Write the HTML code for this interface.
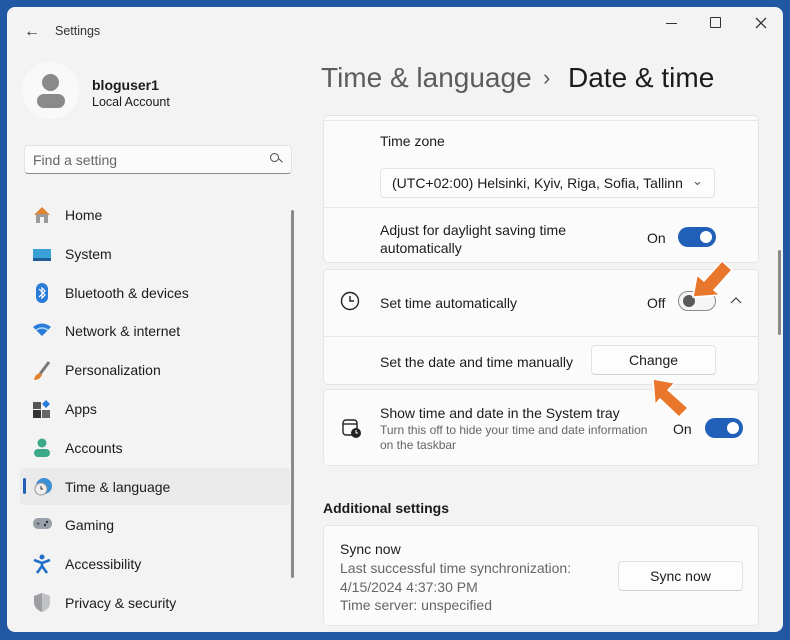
<!DOCTYPE html>
<html><head><meta charset="utf-8"><style>
*{margin:0;padding:0;box-sizing:border-box}
body{width:790px;height:640px;background:#2058a3;font-family:"Liberation Sans",sans-serif;color:#1b1b1b;overflow:hidden;position:relative}
.win{position:absolute;left:7px;top:7px;width:776px;height:625px;background:#f3f3f3;border-radius:8px;overflow:hidden}
.a{position:absolute;white-space:nowrap}
.t14{font-size:14px}
.card{position:absolute;left:316px;width:436px;background:#fbfbfb;border:1px solid #e5e5e5;border-radius:5px}
.div{position:absolute;left:316px;width:436px;height:1px;background:#e8e8e8}
.tog{position:absolute;width:38px;height:20px;border-radius:10px;background:#2160b8}
.tog::after{content:"";position:absolute;right:4px;top:4px;width:12px;height:12px;border-radius:50%;background:#fff}
.off{background:#f6f6f6;border:1px solid #8a8a8a}
.off::after{left:4px;right:auto;top:3px;background:#5a5a5a}
.btn{position:absolute;background:#fdfdfd;border:1px solid #e2e2e2;border-bottom-color:#cfcfcf;border-radius:4px;font-size:14px;text-align:center}
.nav{position:absolute;left:58px;font-size:14px}
.ic{position:absolute;left:26px;width:18px;height:18px}
.sub{color:#666}
</style></head><body>
<div class="win">
<div class="a" style="left:17px;top:16px;font-size:16px;color:#333">←</div>
<div class="a" style="left:48px;top:17px;font-size:12.5px;color:#333">Settings</div>
<div class="a" style="left:659px;top:16px;width:11px;height:1.3px;background:#333"></div>
<div class="a" style="left:703px;top:10px;width:11px;height:11px;border:1.3px solid #333;border-radius:1px"></div>
<svg class="a" style="left:748px;top:10px" width="12" height="12"><path d="M1 1 L11 11 M11 1 L1 11" stroke="#333" stroke-width="1.3"/></svg>

<div class="a" style="left:15px;top:55px;width:57px;height:57px;border-radius:50%;background:#f9f9f9"></div>
<div class="a" style="left:35px;top:67px;width:17px;height:17px;border-radius:50%;background:#8a8a8a"></div>
<div class="a" style="left:30px;top:87px;width:28px;height:14px;border-radius:8px;background:#8a8a8a"></div>
<div class="a" style="left:85px;top:70px;font-size:14px;font-weight:bold">bloguser1</div>
<div class="a" style="left:85px;top:88px;font-size:12.5px">Local Account</div>

<div class="a" style="left:17px;top:138px;width:268px;height:29px;background:#fbfbfb;border:1px solid #e3e3e3;border-bottom:1px solid #8a8a8a;border-radius:4px"></div>
<div class="a" style="left:26px;top:145px;font-size:14px;color:#666">Find a setting</div>
<div class="a" style="left:263px;top:146px;width:9px;height:9px;border:1.3px solid #444;border-radius:50%"></div>
<div class="a" style="left:271px;top:153px;width:5px;height:1.4px;background:#444;transform:rotate(45deg)"></div>

<div class="a" style="left:13px;top:461px;width:270px;height:37px;background:#eaeaea;border-radius:4px"></div>
<div class="a" style="left:16px;top:471px;width:3px;height:16px;background:#2160b8;border-radius:2px"></div>

<div class="ic" style="top:199px"><svg width="18" height="18"><path d="M1 9 L9 1 L17 9 Z" fill="#e2822e"/><rect x="3" y="8" width="12" height="9" fill="#9a9a9a"/><rect x="7" y="11" width="4" height="6" fill="#f3f3f3"/></svg></div>
<div class="nav" style="top:200px">Home</div>
<div class="ic" style="top:239px"><svg width="18" height="18"><rect x="0" y="3" width="18" height="11" fill="#3aa0d8"/><rect x="0" y="12" width="18" height="3" fill="#1f5d99"/></svg></div>
<div class="nav" style="top:239px">System</div>
<div class="ic" style="top:276px"><svg width="18" height="20"><rect x="3" y="0" width="12" height="20" rx="6" fill="#2a7ad8"/><path d="M6 6 L12 12 L9 15 V5 L12 8 L6 14" stroke="#fff" fill="none" stroke-width="1.2"/></svg></div>
<div class="nav" style="top:278px">Bluetooth &amp; devices</div>
<div class="ic" style="top:316px"><svg width="18" height="14"><path d="M0 4 Q9 -3 18 4 L9 13 Z" fill="#2a7ad8"/><path d="M3 7 Q9 3 15 7" stroke="#a9d4f5" fill="none" stroke-width="1.5"/></svg></div>
<div class="nav" style="top:316px">Network &amp; internet</div>
<div class="ic" style="top:354px"><svg width="18" height="20"><path d="M16 1 L7 13" stroke="#777" stroke-width="3"/><path d="M7 12 Q2 13 1 19 Q7 19 9 14 Z" fill="#e2822e"/></svg></div>
<div class="nav" style="top:355px">Personalization</div>
<div class="ic" style="top:393px"><svg width="18" height="18"><rect x="0" y="2" width="8" height="7" fill="#555"/><rect x="0" y="10" width="8" height="8" fill="#333"/><rect x="9" y="10" width="8" height="8" fill="#666"/><path d="M13 0 L17 4 L13 8 L9 4 Z" fill="#2a7ad8"/></svg></div>
<div class="nav" style="top:394px">Apps</div>
<div class="ic" style="top:431px"><svg width="18" height="20"><circle cx="9" cy="5" r="4.5" fill="#3ea88a"/><rect x="1" y="11" width="16" height="8" rx="4" fill="#3ea88a"/></svg></div>
<div class="nav" style="top:433px">Accounts</div>
<div class="ic" style="top:470px"><svg width="20" height="20"><circle cx="11" cy="9" r="8" fill="#3a8fd6"/><circle cx="8" cy="12" r="6" fill="#eee" stroke="#999"/><path d="M8 9 V12 H10" stroke="#333" fill="none"/></svg></div>
<div class="nav" style="top:472px">Time &amp; language</div>
<div class="ic" style="top:510px"><svg width="20" height="14"><rect x="0" y="1" width="19" height="11" rx="5" fill="#9aa0aa"/><text x="3" y="9" font-size="7" fill="#333">+</text><circle cx="14" cy="5" r="1.2" fill="#333"/><circle cx="12" cy="8" r="1.2" fill="#333"/></svg></div>
<div class="nav" style="top:510px">Gaming</div>
<div class="ic" style="top:547px"><svg width="18" height="20"><circle cx="9" cy="3" r="2.5" fill="#1f6fc8"/><path d="M1 6 L9 9 L17 6 M9 9 V12 L4 19 M9 12 L14 19" stroke="#1f6fc8" stroke-width="2.6" fill="none"/></svg></div>
<div class="nav" style="top:549px">Accessibility</div>
<div class="ic" style="top:586px"><svg width="18" height="20"><path d="M9 0 L17 3 V9 Q17 16 9 19 Q1 16 1 9 V3 Z" fill="#9c9ea2"/><path d="M9 0 L17 3 V9 Q17 16 9 19 Z" fill="#c0c2c6"/></svg></div>
<div class="nav" style="top:588px">Privacy &amp; security</div>
<div class="a" style="left:284px;top:203px;width:3px;height:368px;background:#8a8a8a;border-radius:2px"></div>

<div class="a" style="left:314px;top:55px;font-size:28px;color:#5c5c5c">Time &amp; language</div>
<div class="a" style="left:536px;top:58px;font-size:22px;color:#5c5c5c">›</div>
<div class="a" style="left:561px;top:55px;font-size:28px;color:#1b1b1b">Date &amp; time</div>

<div class="card" style="top:108px;height:148px;border-top-color:#e0e0e0"></div>
<div class="div" style="top:113px"></div>
<div class="a t14" style="left:373px;top:126px">Time zone</div>
<div class="a" style="left:373px;top:161px;width:335px;height:30px;background:#fdfdfd;border:1px solid #e4e4e4;border-radius:4px"></div>
<div class="a" style="left:385px;top:168px;font-size:14px;width:290px;overflow:hidden">(UTC+02:00) Helsinki, Kyiv, Riga, Sofia, Tallinn, Vilnius</div>
<div class="a" style="left:685px;top:166px;font-size:13px;color:#555">⌄</div>
<div class="div" style="top:200px"></div>
<div class="a t14" style="left:373px;top:214px;line-height:18px">Adjust for daylight saving time<br>automatically</div>
<div class="a t14" style="left:640px;top:223px">On</div>
<div class="tog" style="left:671px;top:220px"></div>

<div class="card" style="top:262px;height:116px"></div>
<svg class="a" style="left:333px;top:284px" width="20" height="20"><circle cx="10" cy="10" r="8.5" stroke="#222" stroke-width="1.4" fill="none"/><path d="M10 5 V10 H14" stroke="#222" stroke-width="1.4" fill="none"/></svg>
<div class="a t14" style="left:373px;top:288px">Set time automatically</div>
<div class="a t14" style="left:640px;top:288px">Off</div>
<div class="tog off" style="left:671px;top:284px"></div>
<svg class="a" style="left:723px;top:290px" width="12" height="8"><path d="M1 6 L6 1 L11 6" stroke="#444" stroke-width="1.2" fill="none"/></svg>
<div class="div" style="top:329px"></div>
<div class="a t14" style="left:373px;top:347px">Set the date and time manually</div>
<div class="btn" style="left:584px;top:338px;width:125px;height:30px;line-height:28px">Change</div>

<div class="card" style="top:382px;height:77px"></div>
<svg class="a" style="left:335px;top:412px" width="20" height="20"><rect x="1" y="1" width="14" height="15" rx="3" stroke="#222" stroke-width="1.4" fill="none"/><path d="M1 5 H15" stroke="#222" stroke-width="1.4"/><circle cx="14" cy="14" r="5" fill="#222"/><path d="M14 11 V14 H16" stroke="#fff" fill="none"/></svg>
<div class="a t14" style="left:373px;top:398px">Show time and date in the System tray</div>
<div class="a sub" style="left:373px;top:416px;font-size:12px;line-height:15px">Turn this off to hide your time and date information<br>on the taskbar</div>
<div class="a t14" style="left:666px;top:414px">On</div>
<div class="tog" style="left:698px;top:411px"></div>

<div class="a" style="left:316px;top:493px;font-size:14px;font-weight:bold">Additional settings</div>
<div class="card" style="top:518px;height:101px"></div>
<div class="a t14" style="left:333px;top:534px">Sync now</div>
<div class="a t14 sub" style="left:333px;top:552px;line-height:18.5px">Last successful time synchronization:<br>4/15/2024 4:37:30 PM<br>Time server: unspecified</div>
<div class="btn" style="left:611px;top:554px;width:125px;height:30px;line-height:28px">Sync now</div>

<div class="a" style="left:771px;top:243px;width:3px;height:85px;background:#8a8a8a;border-radius:2px"></div>

<svg class="a" style="left:682px;top:250px" width="50" height="45"><path d="M4 40 L8 18 L15 24 L33 4 L43 13 L25 33 L31 38 Z" fill="#e8762b" stroke="#fff" stroke-width="1.5"/></svg>
<svg class="a" style="left:640px;top:368px" width="50" height="45"><path d="M6 4 L28 8 L21 15 L41 33 L32 42 L13 24 L8 30 Z" fill="#e8762b" stroke="#fff" stroke-width="1.5"/></svg>
</div>
</body></html>
